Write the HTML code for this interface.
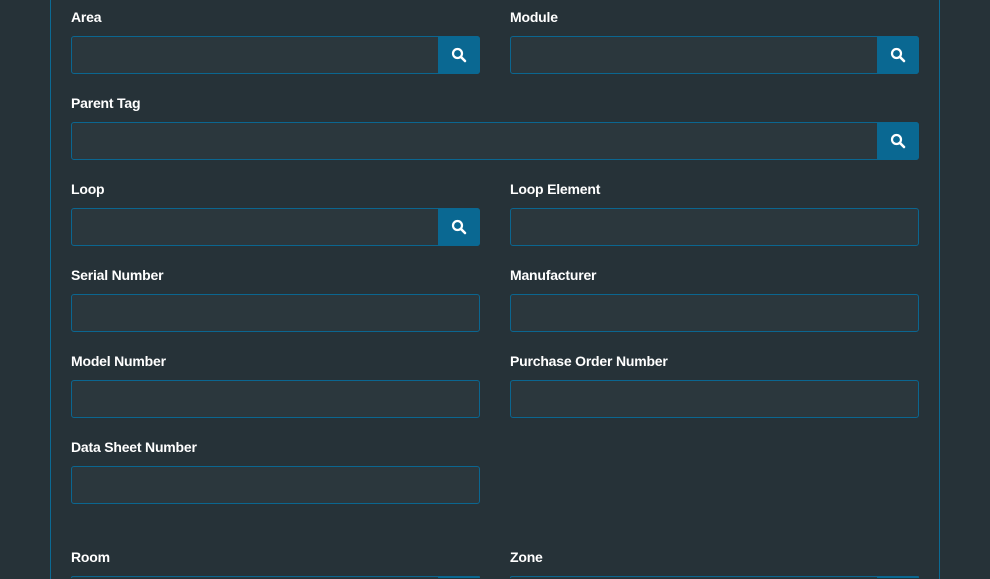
<!DOCTYPE html>
<html><head><style>
html,body{margin:0;padding:0;background:#263238;width:990px;height:579px;overflow:hidden;font-family:"Liberation Sans",sans-serif}
#w{position:relative;width:990px;height:579px;overflow:hidden}
.vl{position:absolute;top:0;width:1px;height:579px;background:#0b6a94}
.lb{position:absolute;color:#fff;font-weight:bold;font-size:14px;line-height:16px;letter-spacing:-0.2px}
.in{position:absolute;height:36px;background:#2b373d;border:1px solid #0b6690;border-radius:3px;box-sizing:content-box}
.bt{position:absolute;top:-1px;right:-1px;width:42px;height:38px;background:#0a6892;border-radius:0 3px 3px 0;display:flex;align-items:center;justify-content:center}
.sm{height:1px;border-bottom:none;border-radius:3px 3px 0 0}
.sm .bt{height:2px}
</style></head><body><div id="w">
<div class="vl" style="left:50px"></div>
<div class="vl" style="left:939px"></div>

<div class="lb" style="left:71px;top:9px">Area</div>
<div class="in" style="left:71px;top:36px;width:407px"><div class="bt"><svg width="16" height="16" viewBox="0 0 16 16"><circle cx="6.5" cy="6.5" r="4.5" fill="none" stroke="#fff" stroke-width="2.2"/><path d="M10 10 L14 14" stroke="#fff" stroke-width="2.6" stroke-linecap="round"/></svg></div></div>
<div class="lb" style="left:510px;top:9px">Module</div>
<div class="in" style="left:510px;top:36px;width:407px"><div class="bt"><svg width="16" height="16" viewBox="0 0 16 16"><circle cx="6.5" cy="6.5" r="4.5" fill="none" stroke="#fff" stroke-width="2.2"/><path d="M10 10 L14 14" stroke="#fff" stroke-width="2.6" stroke-linecap="round"/></svg></div></div>

<div class="lb" style="left:71px;top:95px">Parent Tag</div>
<div class="in" style="left:71px;top:122px;width:846px"><div class="bt"><svg width="16" height="16" viewBox="0 0 16 16"><circle cx="6.5" cy="6.5" r="4.5" fill="none" stroke="#fff" stroke-width="2.2"/><path d="M10 10 L14 14" stroke="#fff" stroke-width="2.6" stroke-linecap="round"/></svg></div></div>

<div class="lb" style="left:71px;top:181px">Loop</div>
<div class="in" style="left:71px;top:208px;width:407px"><div class="bt"><svg width="16" height="16" viewBox="0 0 16 16"><circle cx="6.5" cy="6.5" r="4.5" fill="none" stroke="#fff" stroke-width="2.2"/><path d="M10 10 L14 14" stroke="#fff" stroke-width="2.6" stroke-linecap="round"/></svg></div></div>
<div class="lb" style="left:510px;top:181px">Loop Element</div>
<div class="in" style="left:510px;top:208px;width:407px"></div>

<div class="lb" style="left:71px;top:267px">Serial Number</div>
<div class="in" style="left:71px;top:294px;width:407px"></div>
<div class="lb" style="left:510px;top:267px">Manufacturer</div>
<div class="in" style="left:510px;top:294px;width:407px"></div>

<div class="lb" style="left:71px;top:353px">Model Number</div>
<div class="in" style="left:71px;top:380px;width:407px"></div>
<div class="lb" style="left:510px;top:353px">Purchase Order Number</div>
<div class="in" style="left:510px;top:380px;width:407px"></div>

<div class="lb" style="left:71px;top:439px">Data Sheet Number</div>
<div class="in" style="left:71px;top:466px;width:407px"></div>

<div class="lb" style="left:71px;top:549px">Room</div>
<div class="in sm" style="left:71px;top:576px;width:407px"><div class="bt"></div></div>
<div class="lb" style="left:510px;top:549px">Zone</div>
<div class="in sm" style="left:510px;top:576px;width:407px"><div class="bt"></div></div>
</div></body></html>
